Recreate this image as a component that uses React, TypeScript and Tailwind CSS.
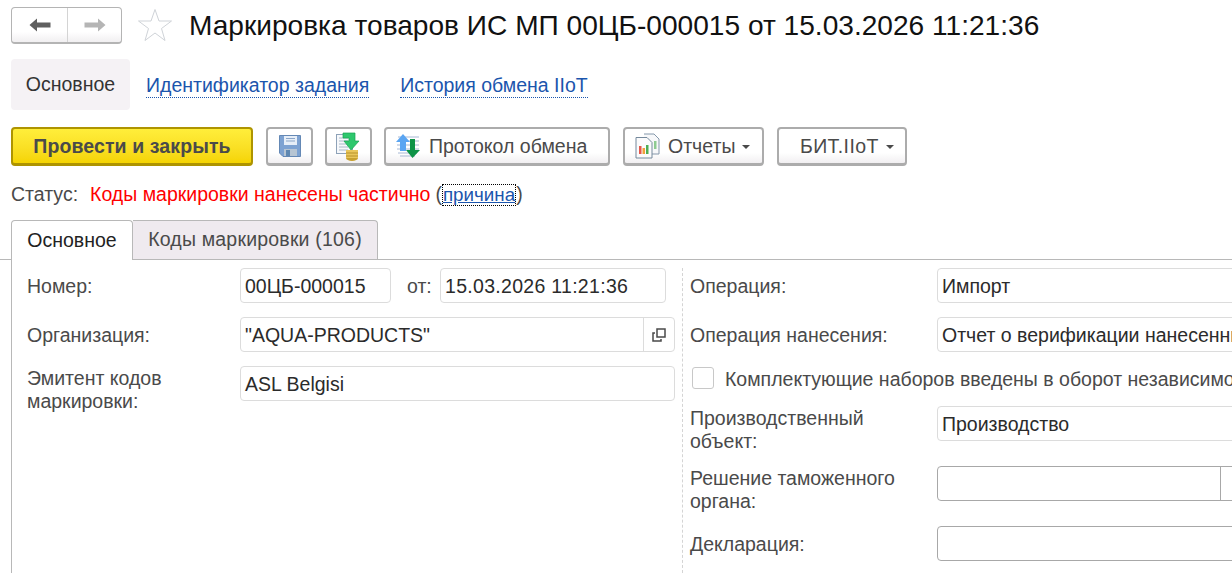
import type { ReactNode } from 'react'

function NavArrows() {
  return (
    <div className="flex h-[37px] w-[111px] rounded-[4px] border border-[#b4b4b4] border-b-2 bg-gradient-to-b from-white from-70% to-[#f1eff1]">
      <div className="flex w-[56px] items-center justify-center border-r border-[#d4d4d4]">
        <svg width="22" height="14" viewBox="0 0 22 14">
          <path d="M0.5 7 L8 0.5 V4.5 H21.5 V9.5 H8 V13.5 Z" fill="#5f5f5f" />
        </svg>
      </div>
      <div className="flex flex-1 items-center justify-center">
        <svg width="22" height="14" viewBox="0 0 22 14">
          <path d="M21.5 7 L14 0.5 V4.5 H0.5 V9.5 H14 V13.5 Z" fill="#b5b5b5" />
        </svg>
      </div>
    </div>
  )
}

function SaveIcon() {
  return (
    <svg width="24" height="24" viewBox="0 0 24 24">
      <path d="M1.5 1.5 H22.5 V22.5 H5 L1.5 19 Z" fill="#7da2d2" stroke="#6488b5" />
      <rect x="6" y="2" width="13" height="9" fill="#e6eef8" />
      <path d="M8 4.5 H17 M8 7 H17" stroke="#8ba6c8" />
      <rect x="6" y="15" width="13" height="7" fill="#b7c5d3" />
      <rect x="8" y="16" width="4" height="6" fill="#5f88b2" />
    </svg>
  )
}

function PostIcon() {
  return (
    <svg width="26" height="30" viewBox="0 0 26 30">
      <rect x="0.5" y="3.5" width="16" height="19" fill="#f6f8fb" stroke="#8ea2b8" />
      <path d="M3 7 H12 M3 10 H12 M3 13 H12 M3 16 H12 M3 19 H12" stroke="#a9b8c8" />
      <ellipse cx="16" cy="27" rx="6" ry="3" fill="#c8a02e" />
      <rect x="10" y="19" width="12" height="8" fill="#e9c65a" />
      <path d="M10 22 H22 M10 25 H22" stroke="#b8922a" />
      <path d="M7 2 H19 V10 H23 L15 19 L8 10 H13 V7 H7 Z" fill="#2ec76d" stroke="#15a552" strokeWidth="0.7" />
    </svg>
  )
}

function ExchangeIcon() {
  return (
    <svg width="26" height="26" viewBox="0 0 26 26">
      <path d="M3 4 H24 M3 8 H24 M2 12 H24 M2 16 H24 M3 20 H22 M5 23 H20" stroke="#a7b8d4" />
      <path d="M8 1 L15 9 H11 V18 H5 V9 H1 Z" fill="#5aa5f2" />
      <path d="M15 6 H20 V17 H25 L17.5 25 L11 17 H15 Z" fill="#0e9347" />
    </svg>
  )
}

function ReportIcon() {
  return (
    <svg width="26" height="26" viewBox="0 0 26 26">
      <path d="M10 1 H20 L25 6 V21 H12" fill="#f7f8fa" stroke="#8497aa" />
      <path d="M2 4.5 H13 L18 9.5 V25 H2 Z" fill="#fbfbfc" stroke="#75899c" />
      <rect x="5" y="13" width="2.5" height="8" fill="#e4574b" />
      <rect x="8.5" y="15" width="2.5" height="6" fill="#f0a13a" />
      <rect x="12" y="12" width="2.5" height="9" fill="#4cae54" />
      <rect x="20" y="8" width="2.5" height="8" fill="#8ecb91" />
    </svg>
  )
}

function ToolButton({ children, className }: { children: ReactNode; className: string }) {
  return (
    <div className={`flex h-[39px] items-center rounded-[4px] border-2 border-[#acacac] border-b-[3px] bg-gradient-to-b from-white from-70% to-[#f1eff1] text-[#4a4a4a] ${className}`}>
      {children}
    </div>
  )
}

function Caret() {
  return <span className="ml-[7px] mt-[2px] h-0 w-0 border-x-[4px] border-t-[4px] border-x-transparent border-t-[#4a4a4a]" />
}

function Field({ value, className, dark, children, valueClass }: { value?: string; className: string; dark?: boolean; children?: ReactNode; valueClass?: string }) {
  return (
    <div className={`flex h-[35px] items-center overflow-hidden whitespace-nowrap rounded-[4px] border bg-white pl-[4px] text-[#2b2b2b] ${dark ? 'border-[#a8a8a8]' : 'border-[#dcdcdc]'} ${className}`}>
      <span className={`flex-1 pt-[2px] ${valueClass ?? ''}`}>{value}</span>
      {children}
    </div>
  )
}

function Label({ children, className }: { children: ReactNode; className: string }) {
  return <div className={`shrink-0 leading-[23px] text-[#4a4a4a] ${className}`}>{children}</div>
}

export default function App() {
  return (
    <div className="h-[573px] w-[1232px] overflow-hidden bg-white font-['Liberation_Sans',Arial,sans-serif] text-[19.5px]">
      {/* Title */}
      <div className="flex h-[59px] items-start pl-[11px] pt-[7px]">
        <NavArrows />
        <svg className="ml-[15px] mt-[1px]" width="36" height="34" viewBox="0 0 36 34">
          <path d="M18 1.5 L22 13 H34.5 L24.5 20.5 L28 32.5 L18 25 L8 32.5 L11.5 20.5 L1.5 13 H14 Z" fill="#fff" stroke="#cfd3d8" />
        </svg>
        <h1 className="ml-[16px] whitespace-nowrap text-[28.1px] font-normal leading-[38px] text-[#111]">
          Маркировка товаров ИС МП 00ЦБ-000015 от 15.03.2026 11:21:36
        </h1>
      </div>

      {/* Sections */}
      <div className="flex h-[51px] items-stretch pl-[11px]">
        <div className="flex w-[119px] items-center justify-center rounded-[4px] bg-[#f5f2f5] text-[#333]">Основное</div>
        <a className="ml-[16px] mt-[15px] h-[24px] whitespace-nowrap border-b border-dotted border-[#1b55ad] leading-[23px] text-[#1b55ad]">Идентификатор задания</a>
        <a className="ml-[31px] mt-[15px] h-[24px] whitespace-nowrap border-b border-dotted border-[#1b55ad] leading-[23px] text-[#1b55ad]">История обмена IIoT</a>
      </div>

      {/* Toolbar */}
      <div className="mt-[17px] flex items-start pl-[11px]">
        <div className="flex h-[39px] w-[242px] items-center justify-center whitespace-nowrap rounded-[4px] border-2 border-[#ae9400] border-b-[3px] bg-gradient-to-b from-[#ffee3a] to-[#f5d400] pt-[2px] font-bold tracking-[0.1px] text-[#4a4a4a]">
          Провести и закрыть
        </div>
        <ToolButton className="ml-[13px] w-[47px] justify-center"><SaveIcon /></ToolButton>
        <ToolButton className="ml-[12px] w-[47px] justify-center"><PostIcon /></ToolButton>
        <ToolButton className="ml-[12px] w-[226px] pl-[9px]">
          <ExchangeIcon />
          <span className="ml-[8px] whitespace-nowrap pt-[2px]">Протокол обмена</span>
        </ToolButton>
        <ToolButton className="ml-[13px] w-[141px] pl-[9px]">
          <ReportIcon />
          <span className="ml-[8px] pt-[2px]">Отчеты</span>
          <Caret />
        </ToolButton>
        <ToolButton className="ml-[13px] w-[130px] pl-[21px]">
          <span className="whitespace-nowrap pt-[2px] tracking-[0.4px]">БИТ.IIoT</span>
          <Caret />
        </ToolButton>
      </div>

      {/* Status */}
      <div className="mt-[17px] flex h-[23px] items-center whitespace-nowrap pl-[11px] text-[#4a4a4a]">
        <span>Статус:</span>
        <span className="ml-[12px] text-[#ff0000]">Коды маркировки нанесены частично</span>
        <span className="ml-[5px]">(</span>
        <span className="border border-dotted border-black text-[18.8px] leading-[20px] text-[#1b55ad] underline">причина</span>
        <span>)</span>
      </div>

      {/* Tabs */}
      <div className="mt-[14px] flex h-[40px] items-stretch border-b border-[#b8b8b8] pl-[11px]">
        <div className="z-10 -mb-px flex w-[122px] items-center justify-center rounded-t-[4px] border border-b-0 border-[#b8b8b8] bg-white text-[#222]">Основное</div>
        <div className="flex w-[245px] items-center justify-center whitespace-nowrap rounded-tr-[4px] border border-l-0 border-[#b8b8b8] border-b-0 bg-[#efeaef] tracking-[0.2px] text-[#4a4a4a]">Коды маркировки (106)</div>
      </div>

      {/* Form */}
      <div className="ml-[11px] flex h-[313px] border-l border-[#b8b8b8] pt-[8px]">
        <div className="flex w-[670px] shrink-0 flex-col gap-[14px] pl-[15px]">
          <div className="flex items-center">
            <Label className="w-[213px] pt-[2px]">Номер:</Label>
            <Field className="w-[151px]" value="00ЦБ-000015" />
            <Label className="ml-[16px] w-[33px] pt-[2px]">от:</Label>
            <Field className="w-[226px]" value="15.03.2026 11:21:36" valueClass="tracking-[0.3px]" />
          </div>
          <div className="flex items-center">
            <Label className="w-[213px] pt-[2px]">Организация:</Label>
            <Field className="w-[435px]" value='"AQUA-PRODUCTS"'>
              <div className="flex h-full w-[31px] items-center justify-center border-l border-[#dcdcdc]">
                <svg width="16" height="16" viewBox="0 0 16 16" fill="none" stroke="#4a4a4a" strokeWidth="1.5">
                  <rect x="6" y="2" width="8" height="8" />
                  <path d="M4 6 H2 V14 H10 V12" />
                </svg>
              </div>
            </Field>
          </div>
          <div className="flex items-start">
            <Label className="w-[213px] pt-[1px]">Эмитент кодов<br />маркировки:</Label>
            <Field className="w-[435px]" value="ASL Belgisi" />
          </div>
        </div>

        <div className="flex-1 overflow-hidden border-l border-dashed border-[#d4d4d4] pl-[7px]">
          <div className="flex w-[600px] flex-col">
            <div className="flex items-center">
              <Label className="w-[247px] pt-[2px]">Операция:</Label>
              <Field className="w-[320px]" value="Импорт" />
            </div>
            <div className="mt-[14px] flex items-center">
              <Label className="w-[247px] pt-[2px]">Операция нанесения:</Label>
              <Field className="w-[320px]" value="Отчет о верификации нанесенных кодов" />
            </div>
            <div className="mt-[15px] flex h-[22px] items-center whitespace-nowrap">
              <span className="ml-[2px] h-[22px] w-[22px] rounded-[3px] border border-[#c8c8c8] bg-white" />
              <span className="ml-[11px] pt-[4px] text-[#4a4a4a]">Комплектующие наборов введены в оборот независимо</span>
            </div>
            <div className="mt-[17px] flex items-start">
              <Label className="w-[247px] pt-[1px]">Производственный<br />объект:</Label>
              <Field className="w-[320px]" value="Производство" />
            </div>
            <div className="mt-[13px] flex items-start">
              <Label className="w-[247px] pt-[1px]">Решение таможенного<br />органа:</Label>
              <Field className="w-[320px]" dark>
                <div className="h-full w-[36px] border-l border-[#a8a8a8]" />
              </Field>
            </div>
            <div className="mt-[13px] flex items-center">
              <Label className="w-[247px] pt-[2px]">Декларация:</Label>
              <Field className="w-[320px]" dark />
            </div>
          </div>
        </div>
      </div>
    </div>
  )
}
